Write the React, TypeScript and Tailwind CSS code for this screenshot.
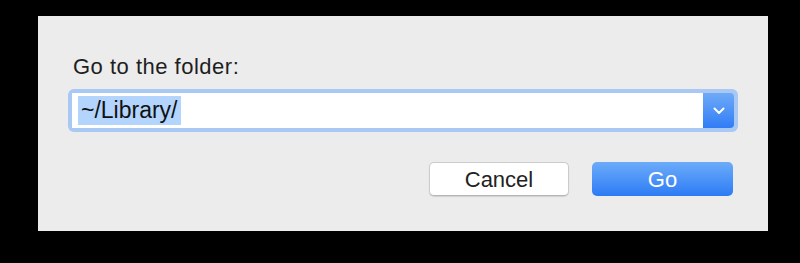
const font = { fontFamily: '"Liberation Sans", Arial, sans-serif' };

function Chevron() {
  return (
    <svg width="12" height="8" viewBox="0 0 12 8" fill="none">
      <path d="M1.5 1.5 L6 6 L10.5 1.5" stroke="white" strokeWidth="2" strokeLinecap="round" strokeLinejoin="round" />
    </svg>
  );
}

export default function App() {
  return (
    <div className="w-[800px] h-[263px] bg-black pt-[16px] pl-[38px]" style={font}>
      <div className="w-[730px] h-[215px] bg-[#ececec] flex flex-col pt-[38px] px-[30px]">
        <div className="pl-[5px] text-[22px] leading-[26px] tracking-[0.5px] text-[#1e1e1e]">Go to the folder:</div>

        <div className="mt-[9px] w-[670px] h-[43px] rounded-[6px] bg-[#a9c8f3] p-[4px] flex">
          <div className="flex-1 bg-white flex items-center pl-[6px]">
            <span className="bg-[#b3d5fd] px-[3px] text-[23px] leading-[29px] text-[#111]">~/Library/</span>
          </div>
          <div className="w-[31px] rounded-r-[4px] bg-gradient-to-b from-[#6eaaf8] to-[#2f7cf5] flex items-center justify-center">
            <Chevron />
          </div>
        </div>

        <div className="mt-[30px] flex justify-end gap-[23px] pr-[5px]">
          <button className="w-[140px] h-[34px] rounded-[5px] bg-white border border-[#cbcbcb] border-b-[#b5b5b5] shadow-[0_1px_1px_rgba(0,0,0,0.12)] text-[22px] text-[#222]">
            Cancel
          </button>
          <button className="w-[141px] h-[34px] rounded-[5px] bg-gradient-to-b from-[#6cabf9] to-[#2c7bf5] text-[22px] text-white">
            Go
          </button>
        </div>
      </div>
    </div>
  );
}
